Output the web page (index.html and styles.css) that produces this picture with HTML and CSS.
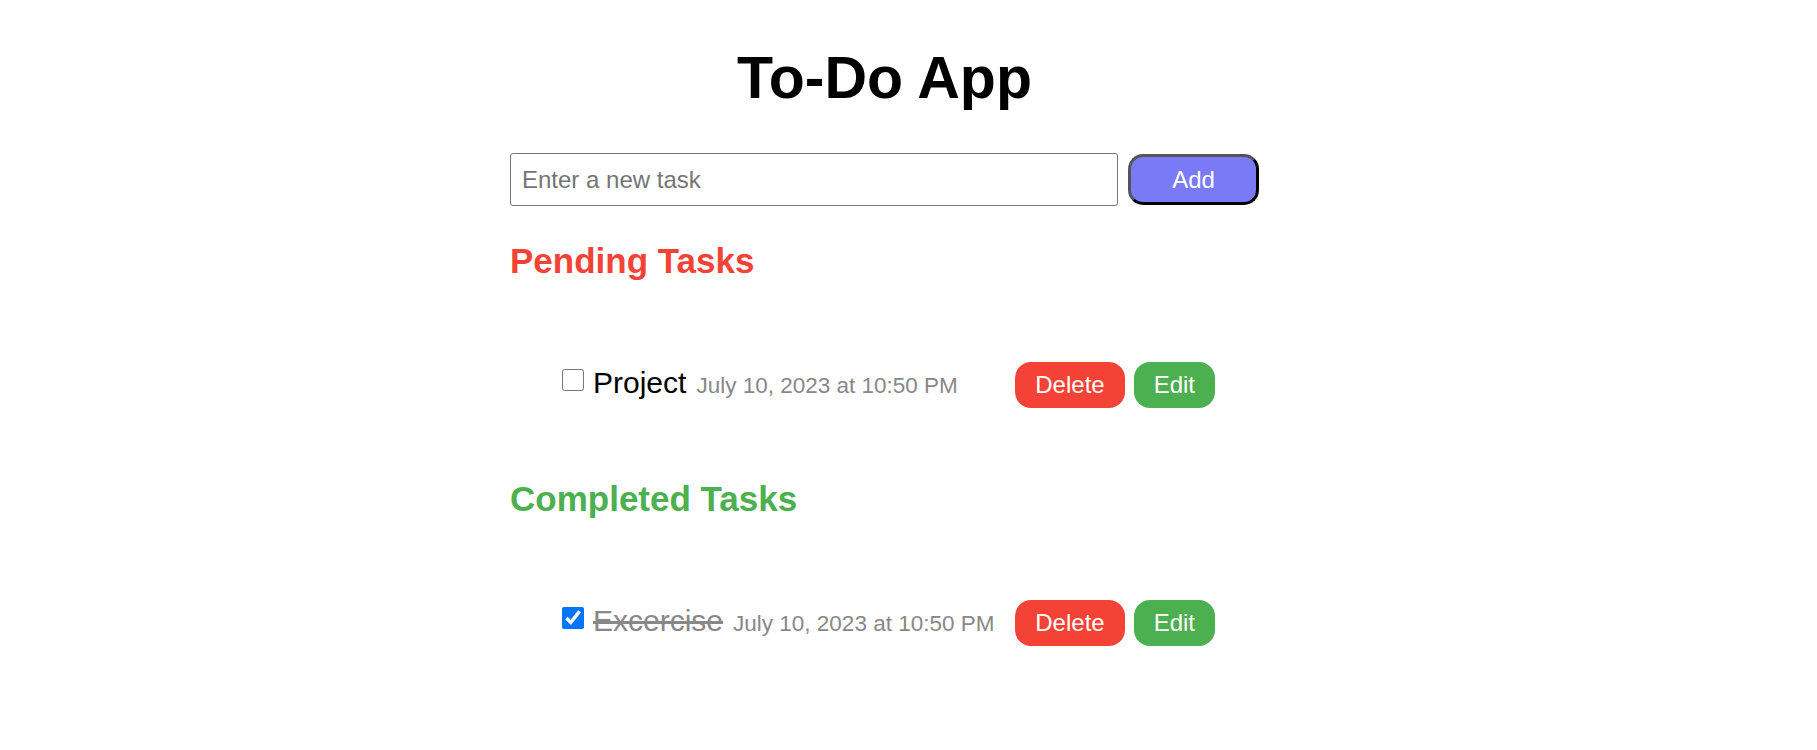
FILE: index.html
```html
<!DOCTYPE html>
<html lang="en">
<head>
<meta charset="utf-8">
<title>To-Do App</title>
<link rel="stylesheet" href="styles.css">
</head>
<body>
<div class="page">
  <div class="app">
    <h1 class="title">To-Do App</h1>
    <form class="new-task">
      <input class="task-input" type="text" placeholder="Enter a new task">
      <button class="add-btn" type="button">Add</button>
    </form>

    <section class="group">
      <h2 class="group-title pending">Pending Tasks</h2>
      <ul class="task-list">
        <li class="task">
          <div class="task-main">
            <input class="task-check" type="checkbox">
            <span class="task-text">Project</span>
            <span class="task-date">July 10, 2023 at 10:50 PM</span>
          </div>
          <div class="task-actions">
            <button class="btn btn-delete" type="button">Delete</button>
            <button class="btn btn-edit" type="button">Edit</button>
          </div>
        </li>
      </ul>
    </section>

    <section class="group group-completed">
      <h2 class="group-title completed">Completed Tasks</h2>
      <ul class="task-list">
        <li class="task">
          <div class="task-main">
            <input class="task-check" type="checkbox" checked>
            <span class="task-text done">Excercise</span>
            <span class="task-date">July 10, 2023 at 10:50 PM</span>
          </div>
          <div class="task-actions">
            <button class="btn btn-delete" type="button">Delete</button>
            <button class="btn btn-edit" type="button">Edit</button>
          </div>
        </li>
      </ul>
    </section>
  </div>
</div>
</body>
</html>
```

FILE: styles.css
```css
html, body {
  margin: 0;
  padding: 0;
  background: #ffffff;
}

body {
  font-family: "Liberation Sans", Arial, sans-serif;
  color: #000;
}

.page {
  width: 797px;
  margin: 0 auto;
  padding-top: 44px;
}

.app {
  width: 749px;
}

.title {
  margin: 0;
  text-align: center;
  font-size: 59px;
  font-weight: bold;
  line-height: normal;
}

.new-task {
  display: flex;
  align-items: center;
  gap: 10px;
  margin: 41px 0 0;
}

.task-input {
  box-sizing: border-box;
  width: 609px;
  height: 53px;
  padding: 0 11px;
  border: 1px solid #767676;
  border-radius: 3px;
  font-family: "Liberation Sans", Arial, sans-serif;
  font-size: 24px;
  color: #000;
  outline: none;
}

.task-input::placeholder {
  color: #757575;
}

.add-btn {
  box-sizing: border-box;
  width: 131px;
  height: 51px;
  padding: 0;
  border: 3px solid;
  border-color: #555 #000 #000 #555;
  border-radius: 15px;
  background: #7a7af6;
  color: #fff;
  font-family: "Liberation Sans", Arial, sans-serif;
  font-size: 24px;
}

.group {
  margin-top: 35px;
}

.group-completed {
  margin-top: 71px;
}

.group-title {
  margin: 0;
  font-size: 35px;
  font-weight: bold;
  line-height: normal;
}

.pending {
  color: #f44336;
}

.completed {
  color: #4caf50;
}

.task-list {
  list-style: none;
  margin: 81px 0 0;
  padding: 0 44px 0 52px;
}

.task {
  display: flex;
  justify-content: space-between;
  align-items: flex-start;
}

.task-main {
  display: flex;
  align-items: baseline;
  padding-top: 4px;
  font-size: 30px;
  line-height: normal;
}

.task-check {
  width: 22px;
  height: 22px;
  margin: 0 9px 0 0;
  align-self: baseline;
  position: relative;
  top: -2px;
}

.task-text {
  color: #000;
}

.task-text.done {
  color: #888;
  text-decoration: line-through;
}

.task-date {
  margin-left: 10px;
  font-size: 22.5px;
  color: #888;
}

.task-actions {
  display: flex;
  gap: 9px;
}

.btn {
  border: none;
  border-radius: 16px;
  padding: 9px 20px;
  color: #fff;
  font-family: "Liberation Sans", Arial, sans-serif;
  font-size: 24px;
  line-height: normal;
}

.btn-delete {
  background: #f44336;
}

.btn-edit {
  background: #4caf50;
}
```
